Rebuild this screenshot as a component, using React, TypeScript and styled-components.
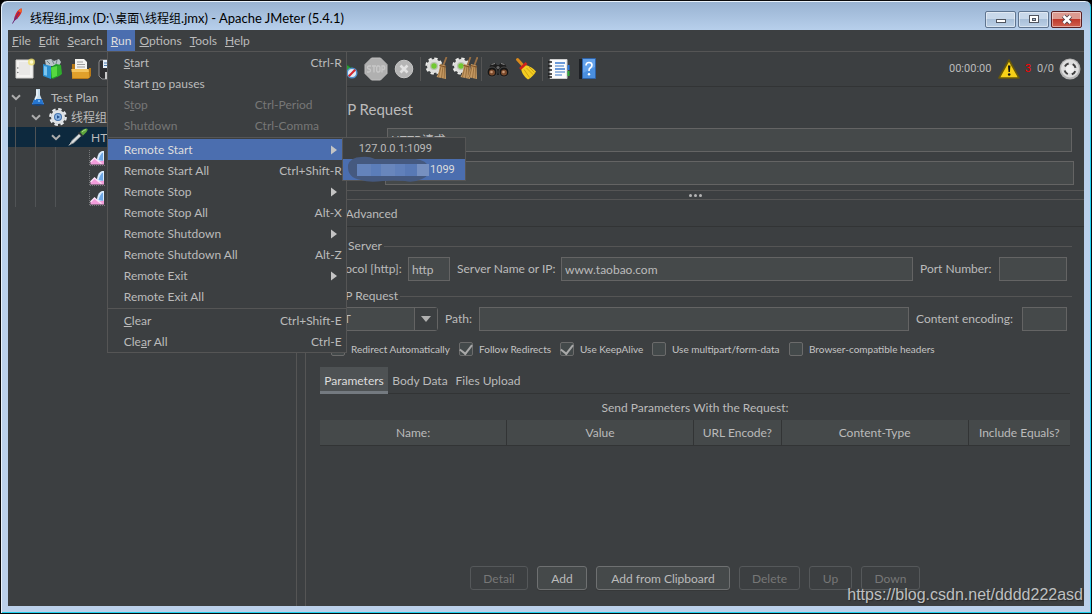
import React from "react";
import styled, { createGlobalStyle, css } from "styled-components";
import { Scissors, Copy, Clipboard, Plus, Minus, Play, Shuffle } from "lucide-react";

const C = {
  bg: "#3c3f41",
  text: "#bbbbbb",
  bright: "#dddddd",
  dim: "#777777",
  select: "#4b6eaf",
  field: "#45494a",
  border: "#646464",
  line: "#555555",
  dark: "#323435",
};

const Global = createGlobalStyle`
  * { box-sizing: border-box; }
  body {
    margin: 0;
    background: #000;
    color: ${C.text};
    font: 12px/20px Lato, "Noto Sans CJK SC", sans-serif;
  }
  button, input, select { font: inherit; color: inherit; margin: 0; }
  button { border: 0; padding: 0; background: none; }
  svg { display: block; flex: none; }
`;

/* ---------- window frame ---------- */

const Window = styled.div`
  position: relative;
  display: flex;
  flex-direction: column;
  min-height: 100vh;
  padding: 0 7px 7px;
  border: 1px solid #0a0a0c;
  border-radius: 7px 7px 0 0;
  background: linear-gradient(#98b2d1, #b7cfeb 29px, #bad1ec 130px, #bbd0ea);
  box-shadow: inset 1px 1px 0 #e9f2fb, inset -1px -1px 0 #1fd0ee;
`;

const TitleBar = styled.header`
  display: flex;
  align-items: center;
  height: 29px;
  padding-left: 1px;
  color: #000;
`;

const Title = styled.h1`
  flex: 1;
  margin: 5px 0 0 5px;
  font-size: 13px;
  line-height: 20px;
  font-weight: 400;
`;

const Cjk = styled.span`
  font-family: "Noto Sans CJK SC", sans-serif;
  font-size: 12px;
`;

const WindowButtons = styled.div`
  display: flex;
  gap: 2px;
  margin: 8px 2px 0 0;
`;

const WindowButton = styled.button<{ $close?: boolean }>`
  display: grid;
  place-items: center;
  width: 31px;
  height: 17px;
  border: 1px solid ${(p) => (p.$close ? "#5a1f22" : "#5f7590")};
  border-radius: 2px;
  box-shadow: inset 0 0 0 1px rgba(255, 255, 255, 0.45);
  background: ${(p) =>
    p.$close
      ? "linear-gradient(#dc9a90 0 45%, #bf3a2c 50%, #d0614f)"
      : "linear-gradient(#c8d8ea 0 45%, #a9c0d9 50%, #bcd0e6)"};
`;

const Client = styled.div`
  display: flex;
  flex: 1;
  flex-direction: column;
  background: ${C.bg};
`;

/* ---------- menus ---------- */

const MenuBar = styled.nav`
  display: flex;
  height: 22px;
  border-bottom: 1px solid ${C.line};
`;

const MenuSlot = styled.div`
  position: relative;
`;

const MenuTitle = styled.button<{ $open?: boolean }>`
  height: 21px;
  padding: 0 4px;
  ${(p) => p.$open && css`background: ${C.select}; color: ${C.bright};`}
`;

const Popup = styled.div`
  position: absolute;
  z-index: 5;
  top: 21px;
  left: 0;
  width: 240px;
  border: 1px solid ${C.line};
  background: ${C.bg};
`;

const PopupRule = styled.hr`
  height: 1px;
  margin: 1px 0;
  border: 0;
  background: ${C.line};
`;

const PopupItem = styled.button<{ $active?: boolean }>`
  display: grid;
  grid-template-columns: 131px 1fr;
  align-items: center;
  width: 100%;
  height: 21px;
  padding: 0 4px 0 16px;
  text-align: left;
  ${(p) => p.$active && css`background: ${C.select}; color: ${C.bright};`}
  &:disabled { color: ${C.dim}; }
`;

const Shortcut = styled.span<{ $left?: boolean }>`
  text-align: ${(p) => (p.$left ? "left" : "right")};
`;

const SubArrow = styled.svg`
  justify-self: end;
  margin-right: 5px;
`;

const SubMenuSlot = styled.div`
  position: relative;
`;

const SubMenu = styled.div`
  position: absolute;
  z-index: 6;
  top: -2px;
  left: 234px;
  width: 124px;
  border: 1px solid ${C.line};
  background: ${C.bg};
  font-family: Roboto, sans-serif;
  font-size: 11px;
`;

const HostItem = styled.button<{ $active?: boolean }>`
  position: relative;
  display: block;
  width: 100%;
  height: 21px;
  padding: 0 10px 0 16px;
  text-align: left;
  ${(p) => p.$active && css`background: ${C.select}; color: ${C.bright}; text-align: right;`}
`;

const Smudge = styled.svg`
  position: absolute;
  top: -3px;
  left: 2px;
`;

/* ---------- toolbar ---------- */

const ToolBar = styled.div`
  display: flex;
  align-items: center;
  height: 35px;
  padding: 0 3px;
  border-bottom: 1px solid ${C.dark};
`;

const Tool = styled.button`
  display: grid;
  flex: none;
  place-items: center;
  width: 28px;
  height: 28px;
`;

const ToolRule = styled.span`
  width: 1px;
  height: 24px;
  margin: 0 2px;
  background: ${C.line};
`;

const Status = styled.div`
  display: flex;
  align-items: center;
  margin-left: auto;
  font-family: Roboto, sans-serif;
  font-size: 11px;
`;

const StatusText = styled.span<{ $w: number; $red?: boolean }>`
  width: ${(p) => p.$w}px;
  ${(p) => p.$red && css`padding-left: 5px; color: #ff0000;`}
`;

/* ---------- split panes ---------- */

const Main = styled.main`
  display: flex;
  flex: 1;
`;

const TreePane = styled.aside`
  flex: none;
  width: 289px;
  border-right: 1px solid ${C.line};
`;

const Splitter = styled.div`
  flex: none;
  width: 9px;
  border-right: 1px solid ${C.line};
`;

const TreeRow = styled.div<{ $selected?: boolean }>`
  display: flex;
  align-items: center;
  height: 20px;
  background: ${(p) => (p.$selected ? "#0d293e" : "transparent")};
`;

const Guide = styled.span`
  width: 13px;
  height: 20px;
  margin-left: 7px;
  border-left: 1px solid #505355;
`;

const TreeSlot = styled.span`
  flex: none;
  display: grid;
  place-items: center;
  width: 20px;
  height: 20px;
`;

const ChevronSlot = styled(TreeSlot)`
  justify-items: start;
  padding-left: 3px;
`;

const TreeText = styled.span`
  margin-left: 3px;
  padding-top: 1px;
`;

/* ---------- editor ---------- */

const Editor = styled.section`
  display: flex;
  flex: 1;
  flex-direction: column;
  min-width: 0;
`;

const Heading = styled.h2`
  margin: 10px 12px 7px;
  font-size: 15px;
  line-height: 24px;
  font-weight: 400;
`;

const Field = styled.input`
  width: 100%;
  min-width: 0;
  height: 24px;
  padding: 0 3px;
  border: 1px solid ${C.border};
  border-radius: 0;
  outline: 0;
  background: ${C.field};
`;

const NameField = styled(Field)`
  padding-bottom: 2px;
  font-family: "Noto Sans CJK SC", sans-serif;
`;

const NameRow = styled.div`
  display: grid;
  grid-template-columns: 67px 1fr;
  align-items: center;
  margin: 0 12px 9px 14px;
`;

const CommentRow = styled(NameRow)`
  grid-template-columns: 65px 1fr;
  margin: 0 10px 5px 14px;
`;

const Grip = styled.div`
  display: flex;
  justify-content: center;
  align-items: center;
  gap: 2px;
  height: 10px;
  border: solid ${C.line};
  border-width: 1px 0;
`;

const GripDot = styled.span`
  width: 3px;
  height: 3px;
  border-radius: 50%;
  background: #b4b4b4;
`;

const Tabs = styled.div`
  display: flex;
  height: 27px;
  border-bottom: 1px solid ${C.dark};
`;

const Tab = styled.button`
  height: 26px;
  padding: 2px 4px 0;
  line-height: 24px;
`;

const Group = styled.fieldset<{ $top: number }>`
  min-width: 0;
  margin: ${(p) => p.$top}px 12px 0 14px;
  padding: 0;
  border: 0;
`;

const GroupTitle = styled.legend`
  display: flex;
  align-items: center;
  gap: 2px;
  width: 100%;
  height: 20px;
  padding: 0;
  &::after {
    content: "";
    flex: 1;
    height: 1px;
    background: ${C.line};
  }
`;

const GroupName = styled.span<{ $w: number }>`
  width: ${(p) => p.$w}px;
  text-align: right;
`;

const FormRow = styled.div<{ $cols: string }>`
  display: grid;
  grid-template-columns: ${(p) => p.$cols};
  column-gap: 7px;
  align-items: center;
  margin: 1px 5px 0 3px;
`;

const EndLabel = styled.label`
  text-align: right;
  white-space: nowrap;
`;

const StartLabel = styled.label`
  white-space: nowrap;
`;

const Combo = styled.div`
  display: grid;
  grid-template-columns: 1fr 23px;
  height: 24px;
  border: 1px solid ${C.border};
  border-radius: 3px;
  background: ${C.field};
`;

const ComboSelect = styled.select`
  grid-area: 1 / 1 / 2 / 3;
  appearance: none;
  padding: 0 4px;
  border: 0;
  outline: 0;
  background: none;
`;

const ComboArrow = styled.span`
  grid-area: 1 / 2;
  display: grid;
  place-items: center;
  border-left: 1px solid ${C.border};
  background: ${C.bg};
  pointer-events: none;
`;

const Checks = styled.div`
  display: flex;
  gap: 11px;
  margin: 10px 0 0 11px;
  font-size: 10px;
  line-height: 16px;
  color: #c4c4c4;
`;

const CheckLabel = styled.label<{ $w?: number }>`
  display: flex;
  align-items: center;
  gap: 6px;
  width: ${(p) => (p.$w ? p.$w + "px" : "auto")};
  white-space: nowrap;
`;

const CheckBox = styled.input`
  appearance: none;
  display: grid;
  flex: none;
  place-items: center;
  width: 14px;
  height: 14px;
  margin: 0;
  border: 1px solid #6b6b6b;
  border-radius: 2px;
  background: #43494a;
  &:checked::after {
    content: "";
    width: 6px;
    height: 10px;
    margin-top: -2px;
    border: solid #a9a9a9;
    border-width: 0 2px 2px 0;
    transform: rotate(38deg);
  }
`;

const SubTabs = styled.div`
  display: flex;
  height: 27px;
  margin: 10px 14px 0;
  border-bottom: 1px solid ${C.dark};
`;

const SubTab = styled.button<{ $w: number; $active?: boolean }>`
  width: ${(p) => p.$w}px;
  height: 27px;
  padding-top: 3px;
  border-bottom: 3px solid transparent;
  ${(p) => p.$active && css`
    border-bottom-color: #747a80;
    background: #4e5254;
    color: ${C.bright};
  `}
`;

const TableArea = styled.div`
  flex: 1;
  margin: 0 14px;
`;

const ParamTable = styled.table`
  width: 100%;
  table-layout: fixed;
  border-collapse: collapse;
  & caption { height: 26px; padding-top: 4px; }
  & th {
    height: 25px;
    padding: 2px 0 0;
    border-bottom: 1px solid ${C.dark};
    background: ${C.field};
    font-weight: 400;
  }
  & th + th { border-left: 1px solid ${C.dark}; }
`;

const Col = styled.col<{ $w: number }>`
  width: ${(p) => p.$w}%;
`;

const Actions = styled.div`
  display: flex;
  justify-content: center;
  gap: 9px;
  margin: 0 14px 16px;
`;

const Action = styled.button<{ $w: number }>`
  width: ${(p) => p.$w}px;
  height: 24px;
  padding-top: 1px;
  border: 1px solid #6e7071;
  border-radius: 3px;
  background: ${C.field};
  box-shadow: 0 1px 0 #363839;
  &:disabled {
    border-color: #55585a;
    background: none;
    box-shadow: none;
    color: ${C.dim};
  }
`;

const Watermark = styled.a`
  position: absolute;
  right: 8px;
  bottom: 8px;
  color: #bfc0c1;
  font: 16px/20px "Liberation Sans", sans-serif;
  text-decoration: none;
  text-shadow: 1px 1px 1px #2a2a2a;
`;

/* ---------- icons ---------- */

const Feather = () => (
  <svg width="16" height="20" viewBox="0 0 16 20">
    <path d="M12.500 2.500c1 1 .2 4-1.200 6.200C9.700 11.500 7 13.500 5 15c.1-2.600 1-6.400 3-9.200 1.300-1.900 3.300-3.400 4.500-3.300z" fill="#d22128" />
    <path d="M12.500 2.500c.8.800.5 2.500-.3 4.200L9 5c1-1.500 2.600-2.500 3.500-2.500z" fill="#f0652a" />
    <path d="M6 10l3 2-4 3z" fill="#8b2a6b" />
    <path d="M10 6 3.500 17.500" stroke="#6d2a78" strokeWidth="1" />
  </svg>
);

const MenuArrow = () => (
  <SubArrow width="6" height="10" viewBox="0 0 6 10">
    <path d="M0 0.500 6 5 0 9.500z" fill="#c4c4c4" />
  </SubArrow>
);

const Chevron = () => (
  <svg width="10" height="7" viewBox="0 0 10 7">
    <path d="M1 1.200 5 5.200 9 1.200" fill="none" stroke="#adadad" strokeWidth="2" />
  </svg>
);

const NewIcon = () => (
  <svg width="22" height="22" viewBox="0 0 22 22">
    <path d="M2 2h17v18H2z" fill="#f4f3f1" stroke="#d6d5d2" />
    <path d="M5 4h11v13H5z" fill="#e9e8e6" />
    <circle cx="3.800" cy="10" r=".7" fill="#666" />
    <circle cx="3.800" cy="14.500" r=".7" fill="#666" />
    <circle cx="17.500" cy="4" r="3.600" fill="#f0e26a" opacity=".75" />
    <circle cx="17.500" cy="4" r="1.800" fill="#fffbd0" />
  </svg>
);

const TemplatesIcon = () => (
  <svg width="22" height="22" viewBox="0 0 22 22">
    <path d="M3 2l6-1 3 2 5-2 2 3-2 4H4z" fill="#b9c4c9" />
    <path d="M5 3l3 3M10 2l2 4M15 2l-1 4" stroke="#6d7f87" />
    <path d="M1 6l8 2v13l-8-3z" fill="#2b8fd0" />
    <path d="M2 8l3 .7v9L2 17z" fill="#7cc6f0" />
    <path d="M9 9l5-3 5 1v10l-8 4-2-1z" fill="#1d9b2a" />
    <path d="M9 9.500l6-1.500v10l-5 2z" fill="#56d840" />
    <path d="M15 8l4-1 1 9-5 3z" fill="#2fae2c" />
  </svg>
);

const OpenIcon = () => (
  <svg width="22" height="22" viewBox="0 0 22 22">
    <path d="M2 6h4v6h13v-2h2v8l-3 3H2z" fill="#b97a17" />
    <path d="M5 1h9l3 3v9H5z" fill="#f3f3f1" />
    <path d="M7 4h6M7 6.500h8M7 9h8" stroke="#9d9d9d" />
    <path d="M1.500 11h17l1 9H2.500z" fill="#e0a02b" />
    <path d="M1.500 11h17l.3 3H1.800z" fill="#f3c35c" />
  </svg>
);

const SaveIcon = () => (
  <svg width="22" height="22" viewBox="0 0 22 22">
    <path d="M2 2h18v19H4l-3-3V4z" fill="#2f2f31" stroke="#8c8c8e" />
    <path d="M5 2h12v8H5z" fill="#e6eef6" />
    <path d="M6 5h10M6 7.500h10" stroke="#4d7db0" />
    <path d="M7 14h9v7H7z" fill="#c9c9c9" />
  </svg>
);

const NoTimersIcon = () => (
  <svg width="24" height="24" viewBox="0 0 24 24">
    <path d="M4 3l13 9L4 20z" fill="#2c9a38" stroke="#1b6c25" />
    <circle cx="16" cy="16" r="4.800" fill="#dfeaf4" stroke="#4f8fca" strokeWidth="1.500" />
    <path d="M12.800 19.200 19.200 12.800" stroke="#d3262d" strokeWidth="2" />
  </svg>
);

const StopIcon = () => (
  <svg width="24" height="24" viewBox="0 0 24 24">
    <path d="M7.500 1h9L23 7.500v9L16.500 23h-9L1 16.500v-9z" fill="#b0b0b0" stroke="#bfbfbf" />
    <g fill="none" stroke="#c8c8c8" strokeWidth="1.300">
      <path d="M7 9H5q-1.500 0-1.500 1.500T5 12q1.500 0 1.500 1.500T5 15H3" />
      <path d="M8 9h4M10 9v6.500" />
      <path d="M13.500 9h1.500l1 1v4l-1 1h-1.500l-.8-1v-4z" />
      <path d="M18 15.500V9h2q1.500 1.800 0 3.500h-2" />
    </g>
  </svg>
);

const ShutdownIcon = () => (
  <svg width="20" height="20" viewBox="0 0 20 20">
    <circle cx="10" cy="10" r="8.800" fill="#b5b5b5" stroke="#c6c6c6" />
    <path d="M6.500 6.500l7 7M13.500 6.500l-7 7" stroke="#e2e2e2" strokeWidth="2.600" />
  </svg>
);

const Cog = () => (
  <>
    <circle cx="9" cy="9" r="7" fill="#dededc" />
    <circle cx="9" cy="9" r="7.600" fill="none" stroke="#ececea" strokeWidth="2" strokeDasharray="3.400 2.570" />
    <circle cx="9" cy="9" r="4" fill="#b8c0b0" />
    <circle cx="9" cy="9" r="2.700" fill="#72c832" />
  </>
);

const BroomShape = () => (
  <>
    <path d="M21.500 0 18.500 8" stroke="#9b7145" strokeWidth="1.800" />
    <path d="M15 7l5.500 1.500L21 22l-9.500-2C13.500 17 14.500 12 15 7z" fill="#c69a63" />
    <path d="M16 9.500 13.500 20M18 9.500 16.500 21M19.500 10l-.3 11.500" stroke="#8d6535" strokeWidth=".8" />
    <path d="M14.500 8.500l6.500 1.500" stroke="#7a4f26" strokeWidth="1.200" />
  </>
);

const ClearIcon = () => (
  <svg width="24" height="24" viewBox="0 0 24 24">
    <Cog />
    <BroomShape />
  </svg>
);

const ClearAllIcon = () => (
  <svg width="26" height="24" viewBox="0 0 26 24">
    <Cog />
    <g transform="translate(-3 0)"><BroomShape /></g>
    <g transform="translate(4 0)"><BroomShape /></g>
  </svg>
);

const BinocularsIcon = () => (
  <svg width="24" height="20" viewBox="0 0 24 20">
    <path d="M5 5l4-1 2 2h2l2-2 4 1 4 8v3H1v-3z" fill="#1d1d1d" />
    <path d="M5.500 5.500l3.500-1M15 4.500l3.500 1" stroke="#8a8a8a" />
    <circle cx="6" cy="13" r="5" fill="#151515" stroke="#4a4a4a" />
    <circle cx="18" cy="13" r="5" fill="#151515" stroke="#4a4a4a" />
    <circle cx="6" cy="13.500" r="3" fill="#7a4a2c" />
    <circle cx="18" cy="13.500" r="3" fill="#7a4a2c" />
    <circle cx="5.500" cy="13" r="1.300" fill="#c99a78" />
    <circle cx="17.500" cy="13" r="1.300" fill="#c99a78" />
    <circle cx="12" cy="8.500" r="1.600" fill="#666" />
  </svg>
);

const YellowBroomIcon = () => (
  <svg width="24" height="24" viewBox="0 0 24 24">
    <path d="M3.500 2.500l5 5.500" stroke="#d98a1c" strokeWidth="3" strokeLinecap="round" />
    <path d="M11 8c4 .5 8 3 11 6.500-2 3.500-4.500 6-8 8C9.500 19.500 7.500 15 7 11.500z" fill="#f3cd21" />
    <path d="M12.500 11l7 7M10 12.500l5.500 8M15 10l5.500 5.500" stroke="#c99d10" strokeWidth=".9" />
    <path d="M12.500 6 6 12" stroke="#d0211c" strokeWidth="2.600" />
  </svg>
);

const NotebookIcon = () => (
  <svg width="24" height="24" viewBox="0 0 24 24">
    <path d="M3 2.500h17v19H3z" fill="#fbfbfb" stroke="#cfcfcf" />
    <path d="M21.500 8v5" stroke="#2d7be0" strokeWidth="2" />
    <path d="M21.500 14v5" stroke="#2fae3a" strokeWidth="2" />
    <path d="M8 6h10M8 12h10" stroke="#3d7bd0" strokeWidth="1.600" />
    <path d="M8 9h9M8 15h10M8 18h7" stroke="#3b78c8" strokeWidth="1.200" />
    <path d="M1 5h4M1 9h4M1 13h4M1 17h4M1 20h4" stroke="#1b1b1b" strokeWidth="1.500" />
  </svg>
);

const HelpIcon = () => (
  <svg width="20" height="24" viewBox="0 0 20 24">
    <path d="M2 2h4v20H2z" fill="#1d2024" />
    <path d="M5.500 1.500h13v20h-13z" fill="#4a8fdf" stroke="#2f62a6" />
    <path d="M6 2h12v8L6 16z" fill="#6eaaf0" opacity=".7" />
    <path d="M9 8.500q0-3 3-3t3 2.600q0 1.700-1.600 2.700T12 14" fill="none" stroke="#fff" strokeWidth="1.600" />
    <circle cx="12" cy="17.300" r="1.200" fill="#fff" />
  </svg>
);

const WarningIcon = () => (
  <svg width="22" height="20" viewBox="0 0 22 20">
    <path d="M11 1 21 19H1z" fill="#f7d117" stroke="#6a5a08" strokeWidth="1.600" strokeLinejoin="round" />
    <path d="M10 6.500h2.400l-.5 6.500h-1.400z" fill="#111" />
    <circle cx="11.200" cy="15.500" r="1.300" fill="#111" />
  </svg>
);

const EngineIcon = () => (
  <svg width="22" height="22" viewBox="0 0 22 22">
    <circle cx="11" cy="11" r="10.500" fill="#b4b4b4" />
    <circle cx="11" cy="10.500" r="9" fill="#dedede" />
    <circle cx="11" cy="11" r="5.600" fill="none" stroke="#3f3f3f" strokeWidth="2" strokeDasharray="4.600 4.200" strokeDashoffset="-2.100" />
    <circle cx="11" cy="11" r="4" fill="#f0f0f0" />
  </svg>
);

const FlaskIcon = () => (
  <svg width="14" height="18" viewBox="0 0 14 18">
    <path d="M5 1h4v6l4 9.500H1L5 7z" fill="#c9dcea" />
    <path d="M3.200 11h7.600l2.200 5.500H1z" fill="#2575d0" />
    <path d="M1 16.500q6 1.500 12 0" stroke="#134a94" />
    <path d="M6 2v6l-2 4" stroke="#fff" fill="none" />
    <circle cx="8" cy="13" r="1" fill="#8cc4f5" />
  </svg>
);

const GearIcon = () => (
  <svg width="18" height="18" viewBox="0 0 18 18">
    <circle cx="9" cy="9" r="7" fill="#dfe3e6" />
    <circle cx="9" cy="9" r="7.800" fill="none" stroke="#e6e9ec" strokeWidth="2.200" strokeDasharray="3.500 2.620" />
    <circle cx="9" cy="9" r="4" fill="#4473ad" />
    <circle cx="9" cy="9" r="3" fill="#8bb4e3" />
    <path d="M8 7.200 11 9l-3 1.800z" fill="#23508c" />
  </svg>
);

const PipetteIcon = () => (
  <svg width="20" height="18" viewBox="0 0 20 18">
    <path d="M2 16.500 4 12.500l7.500-7 2 2-8 7.500z" fill="#dcdfe0" stroke="#8d9394" strokeWidth=".8" />
    <path d="M1 17.500l3-4" stroke="#c9c9c9" />
    <path d="M10.500 4.500l4 4" stroke="#3a3a3a" strokeWidth="1.600" />
    <path d="M12 4q3-3.500 6-3.500t.5 3.500L15 7.500z" fill="#5fa53c" />
    <path d="M14 4q2-2.200 4-2.300" stroke="#a8d98a" fill="none" />
  </svg>
);

const GraphIcon = () => (
  <svg width="18" height="20" viewBox="0 0 18 20">
    <path d="M.5 3v15.500H16" fill="none" stroke="#77797b" strokeDasharray="1 1" />
    <path d="M8 12q1-7 5-8h2v13H9z" fill="#d9ebfd" />
    <path d="M9.500 13q1.500-6 4.500-7.500V14z" fill="#6fa8e6" />
    <path d="M1.500 17.500v-2.500l4-4 4 3.500 5.500-1v4z" fill="#f29ddb" />
    <path d="M1.500 15l4-4 4 3.500 3 2" fill="none" stroke="#fbe3f6" strokeWidth="1.400" />
  </svg>
);

/* ---------- data ---------- */

type Item = { label: React.ReactNode; keys?: string; sub?: boolean; off?: boolean };

const runItems: Item[][] = [
  [
    { label: <><u>S</u>tart</>, keys: "Ctrl-R" },
    { label: <>Start <u>n</u>o pauses</> },
    { label: <>S<u>t</u>op</>, keys: "Ctrl-Period", off: true },
    { label: "Shutdown", keys: "Ctrl-Comma", off: true },
  ],
  [
    { label: "Remote Start All", keys: "Ctrl+Shift-R" },
    { label: "Remote Stop", sub: true },
    { label: "Remote Stop All", keys: "Alt-X" },
    { label: "Remote Shutdown", sub: true },
    { label: "Remote Shutdown All", keys: "Alt-Z" },
    { label: "Remote Exit", sub: true },
    { label: "Remote Exit All" },
  ],
  [
    { label: <><u>C</u>lear</>, keys: "Ctrl+Shift-E" },
    { label: <>Cle<u>a</u>r All</>, keys: "Ctrl-E" },
  ],
];

const Items = ({ list }: { list: Item[] }) => (
  <>
    {list.map((it, i) => (
      <PopupItem key={i} disabled={it.off}>
        <span>{it.label}</span>
        {it.keys && <Shortcut $left={it.off}>{it.keys}</Shortcut>}
        {it.sub && <MenuArrow />}
      </PopupItem>
    ))}
  </>
);

const Tree = () => (
  <TreePane>
    <TreeRow>
      <ChevronSlot><Chevron /></ChevronSlot>
      <TreeSlot><FlaskIcon /></TreeSlot>
      <TreeText>Test Plan</TreeText>
    </TreeRow>
    <TreeRow>
      <Guide />
      <ChevronSlot><Chevron /></ChevronSlot>
      <TreeSlot><GearIcon /></TreeSlot>
      <TreeText><Cjk>线程组</Cjk></TreeText>
    </TreeRow>
    <TreeRow $selected>
      <Guide /><Guide />
      <ChevronSlot><Chevron /></ChevronSlot>
      <TreeSlot><PipetteIcon /></TreeSlot>
      <TreeText>HTTP请求</TreeText>
    </TreeRow>
    {[0, 1, 2].map((n) => (
      <TreeRow key={n}>
        <Guide /><Guide /><Guide />
        <TreeSlot />
        <TreeSlot><GraphIcon /></TreeSlot>
      </TreeRow>
    ))}
  </TreePane>
);

const checks = [
  { label: "Redirect Automatically", on: false, w: 117 },
  { label: "Follow Redirects", on: true, w: 90 },
  { label: "Use KeepAlive", on: true, w: 81 },
  { label: "Use multipart/form-data", on: false, w: 126 },
  { label: "Browser-compatible headers", on: false },
];

const actions = [
  { label: "Detail", w: 58, off: true },
  { label: "Add", w: 50 },
  { label: "Add from Clipboard", w: 134 },
  { label: "Delete", w: 61, off: true },
  { label: "Up", w: 43, off: true },
  { label: "Down", w: 59, off: true },
];

export default function App() {
  return (
    <Window>
      <Global />
      <TitleBar>
        <Feather />
        <Title>
          <Cjk>线程组</Cjk>.jmx (D:\<Cjk>桌面</Cjk>\<Cjk>线程组</Cjk>.jmx) - Apache JMeter (5.4.1)
        </Title>
        <WindowButtons>
          <WindowButton aria-label="Minimize">
            <svg width="12" height="11" viewBox="0 0 12 11">
              <rect x="1.500" y="5.500" width="9" height="3" fill="#fff" stroke="#50555f" />
            </svg>
          </WindowButton>
          <WindowButton aria-label="Maximize">
            <svg width="12" height="11" viewBox="0 0 12 11">
              <rect x="1.500" y="1.500" width="9" height="7" fill="#fff" stroke="#50555f" />
              <rect x="4.500" y="4.500" width="3" height="2" fill="#a6bdd6" stroke="#50555f" />
            </svg>
          </WindowButton>
          <WindowButton $close aria-label="Close">
            <svg width="12" height="11" viewBox="0 0 12 11">
              <path d="M2.500 2l7 7M9.500 2l-7 7" stroke="#50404a" strokeWidth="4.400" />
              <path d="M2.500 2l7 7M9.500 2l-7 7" stroke="#fff" strokeWidth="2.600" />
            </svg>
          </WindowButton>
        </WindowButtons>
      </TitleBar>

      <Client>
        <MenuBar>
          <MenuTitle><u>F</u>ile</MenuTitle>
          <MenuTitle><u>E</u>dit</MenuTitle>
          <MenuTitle><u>S</u>earch</MenuTitle>
          <MenuSlot>
            <MenuTitle $open><u>R</u>un</MenuTitle>
            <Popup>
              <Items list={runItems[0]} />
              <PopupRule />
              <SubMenuSlot>
                <PopupItem $active>
                  <span>Remote Start</span>
                  <MenuArrow />
                </PopupItem>
                <SubMenu>
                  <HostItem>127.0.0.1:1099</HostItem>
                  <HostItem $active>
                    <Smudge width="88" height="27" viewBox="0 0 88 27">
                      <path d="M3 9Q6 1 16 1q8-1 14 2h40q12 1 14 9 1 8-7 11-9 4-17 2-12-1-22 0-14 2-22-1Q2 22 3 9z" fill="#45597f" />
                      <rect x="12" y="8" width="14" height="12" fill="#6483bb" />
                      <rect x="26" y="8" width="10" height="12" fill="#5b7db9" />
                      <rect x="36" y="8" width="14" height="12" fill="#6886bc" />
                      <rect x="50" y="8" width="10" height="12" fill="#6080ba" />
                      <rect x="60" y="8" width="12" height="12" fill="#5879b5" />
                      <rect x="72" y="8" width="12" height="12" fill="#7690c0" />
                    </Smudge>
                    1099
                  </HostItem>
                </SubMenu>
              </SubMenuSlot>
              <Items list={runItems[1]} />
              <PopupRule />
              <Items list={runItems[2]} />
            </Popup>
          </MenuSlot>
          <MenuTitle><u>O</u>ptions</MenuTitle>
          <MenuTitle><u>T</u>ools</MenuTitle>
          <MenuTitle><u>H</u>elp</MenuTitle>
        </MenuBar>

        <ToolBar>
          <Tool aria-label="New"><NewIcon /></Tool>
          <Tool aria-label="Templates"><TemplatesIcon /></Tool>
          <Tool aria-label="Open"><OpenIcon /></Tool>
          <Tool aria-label="Save"><SaveIcon /></Tool>
          <ToolRule />
          <Tool aria-label="Cut"><Scissors size={18} /></Tool>
          <Tool aria-label="Copy"><Copy size={18} /></Tool>
          <Tool aria-label="Paste"><Clipboard size={18} /></Tool>
          <ToolRule />
          <Tool aria-label="Expand all"><Plus size={18} /></Tool>
          <Tool aria-label="Collapse all"><Minus size={18} /></Tool>
          <Tool aria-label="Toggle"><Shuffle size={18} /></Tool>
          <ToolRule />
          <Tool aria-label="Start"><Play size={18} /></Tool>
          <Tool aria-label="Start no pauses"><NoTimersIcon /></Tool>
          <Tool aria-label="Stop" disabled><StopIcon /></Tool>
          <Tool aria-label="Shutdown" disabled><ShutdownIcon /></Tool>
          <ToolRule />
          <Tool aria-label="Clear"><ClearIcon /></Tool>
          <Tool aria-label="Clear all"><ClearAllIcon /></Tool>
          <ToolRule />
          <Tool aria-label="Search"><BinocularsIcon /></Tool>
          <Tool aria-label="Reset search"><YellowBroomIcon /></Tool>
          <ToolRule />
          <Tool aria-label="Function helper"><NotebookIcon /></Tool>
          <Tool aria-label="Help"><HelpIcon /></Tool>
          <Status>
            <StatusText $w={49}>00:00:00</StatusText>
            <WarningIcon />
            <StatusText $w={17} $red>3</StatusText>
            <StatusText $w={22}>0/0</StatusText>
            <EngineIcon />
          </Status>
        </ToolBar>

        <Main>
          <Tree />
          <Splitter />
          <Editor>
            <Heading>HTTP Request</Heading>
            <NameRow>
              <label htmlFor="name">Name:</label>
              <NameField id="name" defaultValue="HTTP请求" />
            </NameRow>
            <CommentRow>
              <label htmlFor="comments">Comments:</label>
              <Field id="comments" />
            </CommentRow>
            <Grip><GripDot /><GripDot /><GripDot /></Grip>
            <Tabs>
              <Tab>Basic</Tab>
              <Tab>Advanced</Tab>
            </Tabs>

            <Group $top={9}>
              <GroupTitle><GroupName $w={62}>Web Server</GroupName></GroupTitle>
              <FormRow $cols="78px 42px 97px 1fr 72px 68px">
                <EndLabel htmlFor="protocol">Protocol [http]:</EndLabel>
                <Field id="protocol" defaultValue="http" />
                <StartLabel htmlFor="server">Server Name or IP:</StartLabel>
                <Field id="server" defaultValue="www.taobao.com" />
                <StartLabel htmlFor="port">Port Number:</StartLabel>
                <Field id="port" />
              </FormRow>
            </Group>

            <Group $top={5}>
              <GroupTitle><GroupName $w={78}>HTTP Request</GroupName></GroupTitle>
              <FormRow $cols="115px 27px 1fr 99px 45px">
                <Combo>
                  <ComboSelect aria-label="Method" defaultValue="GET">
                    <option>GET</option>
                    <option>POST</option>
                  </ComboSelect>
                  <ComboArrow>
                    <svg width="10" height="6" viewBox="0 0 10 6">
                      <path d="M0 0h10L5 6z" fill="#b0b0b0" />
                    </svg>
                  </ComboArrow>
                </Combo>
                <StartLabel htmlFor="path">Path:</StartLabel>
                <Field id="path" />
                <StartLabel htmlFor="encoding">Content encoding:</StartLabel>
                <Field id="encoding" />
              </FormRow>
              <Checks>
                {checks.map((c) => (
                  <CheckLabel key={c.label} $w={c.w}>
                    <CheckBox type="checkbox" defaultChecked={c.on} />
                    {c.label}
                  </CheckLabel>
                ))}
              </Checks>
            </Group>

            <SubTabs>
              <SubTab $w={68} $active>Parameters</SubTab>
              <SubTab $w={64}>Body Data</SubTab>
              <SubTab $w={72}>Files Upload</SubTab>
            </SubTabs>
            <TableArea>
              <ParamTable>
                <caption>Send Parameters With the Request:</caption>
                <colgroup>
                  <Col $w={24.9} /><Col $w={24.9} /><Col $w={11.7} /><Col $w={24.9} /><Col $w={13.6} />
                </colgroup>
                <thead>
                  <tr>
                    <th>Name:</th>
                    <th>Value</th>
                    <th>URL Encode?</th>
                    <th>Content-Type</th>
                    <th>Include Equals?</th>
                  </tr>
                </thead>
              </ParamTable>
            </TableArea>
            <Actions>
              {actions.map((a) => (
                <Action key={a.label} $w={a.w} disabled={a.off}>{a.label}</Action>
              ))}
            </Actions>
          </Editor>
        </Main>
      </Client>
      <Watermark href="https://blog.csdn.net/dddd222asd">https://blog.csdn.net/dddd222asd</Watermark>
    </Window>
  );
}
